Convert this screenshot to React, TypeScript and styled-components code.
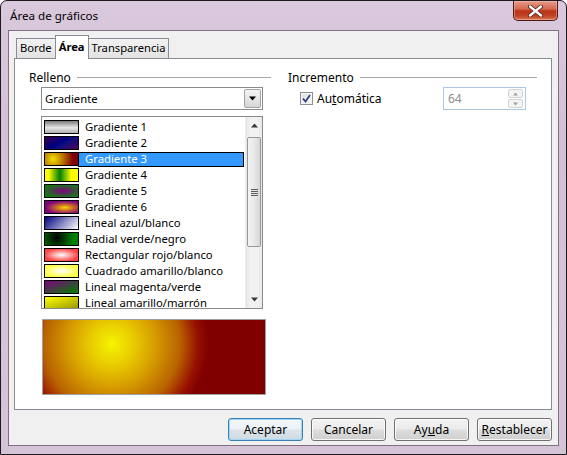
import styled, { createGlobalStyle } from "styled-components";

const GlobalStyle = createGlobalStyle`
  html, body {
    margin: 0;
    padding: 0;
    background: #ffffff;
  }
  body {
    font-family: "Noto Sans", "DejaVu Sans", sans-serif;
    font-size: 11.5px;
    color: #000000;
  }
  * {
    box-sizing: border-box;
  }
`;

// marco de la ventana (estilo Aero)
const Window = styled.div`
  width: 567px;
  height: 455px;
  border: 1px solid #1d191f;
  border-radius: 7px 7px 0 0;
  background: linear-gradient(to bottom, #dac8dc, #d3c0d5 30%, #d5c4d7);
  display: flex;
  flex-direction: column;
  overflow: hidden;
`;

const TitleBar = styled.div`
  height: 29px;
  flex: none;
  display: flex;
  align-items: flex-start;
  padding-left: 9px;
`;

const Title = styled.div`
  font-size: 11.6px;
  line-height: 29px;
  flex: 1;
`;

const CloseButton = styled.div`
  width: 45px;
  height: 20px;
  margin-right: 8px;
  border: 1px solid #4e1a12;
  border-top: none;
  border-radius: 0 0 5px 5px;
  background: linear-gradient(
    to bottom,
    #e59a8a 0%,
    #d46a52 42%,
    #bb3418 52%,
    #c04224 78%,
    #d87a5a 100%
  );
  box-shadow: inset 0 0 0 1px rgba(255, 210, 200, 0.4);
  display: flex;
  align-items: center;
  justify-content: center;
`;

const Client = styled.div`
  flex: 1;
  margin: 0 7px 8px 7px;
  border: 1px solid #7d7181;
  background: #f0f0f0;
  padding: 4px 6px 4px 5px;
  display: flex;
  flex-direction: column;
`;

const TabRow = styled.div`
  height: 23px;
  display: flex;
  align-items: flex-end;
  padding-left: 2px;
`;

const Tab = styled.div<{ $active?: boolean }>`
  position: relative;
  height: ${(p) => (p.$active ? "24px" : "20px")};
  margin-bottom: ${(p) => (p.$active ? "-1px" : "0")};
  padding: 0 3px;
  border: 1px solid #898c95;
  border-bottom: none;
  background: ${(p) =>
    p.$active ? "#ffffff" : "linear-gradient(to bottom, #f2f2f2, #e2e2e2)"};
  font-size: 11.2px;
  font-weight: ${(p) => (p.$active ? 700 : 400)};
  line-height: ${(p) => (p.$active ? "21px" : "18px")};
  z-index: ${(p) => (p.$active ? 1 : 0)};
  & + & {
    margin-left: -1px;
  }
`;

const Panel = styled.div`
  height: 352px;
  border: 1px solid #898c95;
  background: #ffffff;
  padding: 11px 14px 0 14px;
  display: grid;
  grid-template-columns: 242px 1fr;
  column-gap: 17px;
  align-items: start;
`;

const Column = styled.div`
  display: flex;
  flex-direction: column;
`;

const GroupHeader = styled.div`
  height: 15px;
  display: flex;
  align-items: center;
  font-size: 12px;
  &::after {
    content: "";
    flex: 1;
    margin-left: 6px;
    border-top: 1px solid #a9a9a9;
  }
`;

const Dropdown = styled.div`
  margin: 2px 0 0 12px;
  width: 222px;
  height: 23px;
  border: 1px solid #8a8a8a;
  background: #ffffff;
  display: flex;
  align-items: center;
  padding: 0 1px 0 3px;
  font-size: 11.3px;
`;

const DropdownText = styled.span`
  flex: 1;
`;

const DropButton = styled.div`
  width: 17px;
  height: 19px;
  border: 1px solid #a3a3a3;
  border-radius: 2px;
  background: linear-gradient(to bottom, #f4f4f4, #e6e6e6 50%, #d6d6d6);
  display: flex;
  align-items: center;
  justify-content: center;
`;

const ListBox = styled.div`
  margin: 6px 0 0 12px;
  width: 222px;
  height: 193px;
  border: 1px solid #8a8a8a;
  background: #ffffff;
  display: flex;
  overflow: hidden;
`;

const Items = styled.div`
  flex: 1;
  padding: 2px 1px 0 2px;
  overflow: hidden;
`;

const Row = styled.div`
  height: 16px;
  display: flex;
  align-items: center;
`;

const Swatch = styled.div<{ $bg: string }>`
  width: 35px;
  height: 14px;
  flex: none;
  border: 1px solid #000000;
  background: ${(p) => p.$bg};
`;

const ItemLabel = styled.div<{ $selected?: boolean }>`
  flex: 1;
  height: 15px;
  margin-left: -1px;
  padding-left: 6px;
  border: 1px solid ${(p) => (p.$selected ? "#000000" : "transparent")};
  background: ${(p) => (p.$selected ? "#3399ff" : "transparent")};
  color: ${(p) => (p.$selected ? "#ffffff" : "#000000")};
  font-size: 11.3px;
  line-height: 11px;
  white-space: nowrap;
`;

const ScrollBar = styled.div`
  width: 17px;
  flex: none;
  display: flex;
  flex-direction: column;
  background: linear-gradient(to right, #e6e6e6, #f2f2f2 30%, #f2f2f2 70%, #e8e8e8);
  border-left: 1px solid #ececec;
`;

const ScrollArrow = styled.div`
  height: 17px;
  flex: none;
  display: flex;
  align-items: center;
  justify-content: center;
`;

const ScrollTrack = styled.div`
  flex: 1;
  padding: 3px 1px 0 1px;
`;

const Thumb = styled.div`
  height: 110px;
  border: 1px solid #979797;
  border-radius: 2px;
  background: linear-gradient(to right, #f3f3f3, #e9e9e9 50%, #d6d6d6);
  display: flex;
  flex-direction: column;
  align-items: center;
  justify-content: center;
  gap: 1px;
`;

const GripLine = styled.div`
  width: 7px;
  height: 1px;
  background: #5a5a5a;
  box-shadow: 0 1px 0 #e8e8e8;
`;

const Preview = styled.div`
  margin: 10px 0 0 13px;
  width: 224px;
  height: 76px;
  border: 1px solid #a0a0a0;
  background: radial-gradient(
    circle at 69px 24px,
    #f4f400 0px,
    #ebd300 18px,
    #d9a400 40px,
    #b96200 68px,
    #960f00 86px,
    #800000 96px
  );
`;

const CheckRow = styled.div`
  margin-top: 2px;
  height: 23px;
  display: flex;
  align-items: center;
  font-size: 12px;
`;

const CheckBox = styled.div`
  width: 13px;
  height: 13px;
  margin-left: 12px;
  margin-right: 4px;
  border: 1px solid #8e8f8f;
  background: linear-gradient(135deg, #dedede, #fbfbfb);
  box-shadow: inset 0 0 0 1px #f4f4f4;
  display: flex;
  align-items: center;
  justify-content: center;
`;

const U = styled.span`
  text-decoration: underline;
`;

const SpinBox = styled.div`
  margin-left: auto;
  margin-right: 11px;
  width: 83px;
  height: 23px;
  border: 1px solid #aec6e4;
  background: #ffffff;
  display: flex;
  align-items: center;
  padding: 0 2px 0 4px;
  color: #8d8d8d;
`;

const SpinValue = styled.span`
  flex: 1;
`;

const SpinButtons = styled.div`
  width: 15px;
  height: 19px;
  display: flex;
  flex-direction: column;
  gap: 1px;
`;

const SpinButton = styled.div`
  flex: 1;
  border: 1px solid #d3d3d3;
  border-radius: 2px;
  background: #f4f4f4;
  display: flex;
  align-items: center;
  justify-content: center;
`;

const ButtonRow = styled.div`
  margin-top: 8px;
  display: flex;
  justify-content: flex-end;
  gap: 8px;
`;

const Button = styled.div<{ $default?: boolean }>`
  width: 75px;
  height: 23px;
  border: 1px solid ${(p) => (p.$default ? "#3c7fb1" : "#707070")};
  border-radius: 3px;
  background: ${(p) =>
    p.$default
      ? "linear-gradient(to bottom, #f4f8fb 0%, #ecf2f6 48%, #dbe4ea 52%, #cfd9e0 100%)"
      : "linear-gradient(to bottom, #f2f2f2 0%, #ebebeb 48%, #dddddd 52%, #cfcfcf 100%)"};
  box-shadow: inset 0 0 0 1px
    ${(p) => (p.$default ? "#9ed6f6" : "rgba(255, 255, 255, 0.8)")};
  font-size: 12px;
  display: flex;
  align-items: center;
  justify-content: center;
`;

const ArrowDown = ({ color = "#000", w = 7 }: { color?: string; w?: number }) => (
  <svg width={w} height={Math.ceil(w / 2) + 1} viewBox="0 0 7 4">
    <path d="M0 0 H7 L3.5 4 Z" fill={color} />
  </svg>
);

const ArrowUp = ({ color = "#000", w = 7 }: { color?: string; w?: number }) => (
  <svg width={w} height={Math.ceil(w / 2) + 1} viewBox="0 0 7 4">
    <path d="M0 4 H7 L3.5 0 Z" fill={color} />
  </svg>
);

const gradients = [
  { name: "Gradiente 1", bg: "linear-gradient(to bottom, #7a7a7a, #e6e6e6 55%, #b0b0b0)" },
  { name: "Gradiente 2", bg: "linear-gradient(150deg, #3a0050, #000080 45%, #10107a 60%, #500060)" },
  { name: "Gradiente 3", bg: "radial-gradient(circle at 8px 6px, #f0e000, #c08000 9px, #800000 20px)" },
  { name: "Gradiente 4", bg: "linear-gradient(to right, #ffff00 10%, #008000 45%, #ffff00 80%)" },
  { name: "Gradiente 5", bg: "radial-gradient(ellipse at 55% 50%, #800080, #207020 70%, #008000)" },
  { name: "Gradiente 6", bg: "radial-gradient(ellipse at 60% 55%, #ffd000, #c06030 35%, #800080 70%)" },
  { name: "Lineal azul/blanco", bg: "linear-gradient(135deg, #000080, #ffffff)" },
  { name: "Radial verde/negro", bg: "radial-gradient(circle at 35% 35%, #000000, #008000 75%)" },
  { name: "Rectangular rojo/blanco", bg: "radial-gradient(ellipse at 50% 50%, #ffffff, #ff4040 75%)" },
  { name: "Cuadrado amarillo/blanco", bg: "radial-gradient(ellipse at 50% 50%, #ffffff, #ffff40 75%)" },
  { name: "Lineal magenta/verde", bg: "linear-gradient(160deg, #800080, #008000)" },
  { name: "Lineal amarillo/marrón", bg: "linear-gradient(160deg, #ffff00, #808000 120%)" },
];

const App = () => (
  <>
    <GlobalStyle />
    <Window>
      <TitleBar>
        <Title>Área de gráficos</Title>
        <CloseButton>
          <svg width="15" height="12" viewBox="0 0 15 12">
            <path
              d="M2 1.5 L13 10.5 M13 1.5 L2 10.5"
              stroke="#4a2018"
              strokeWidth="4"
              strokeLinecap="round"
            />
            <path
              d="M2 1.5 L13 10.5 M13 1.5 L2 10.5"
              stroke="#ffffff"
              strokeWidth="2.4"
              strokeLinecap="round"
            />
          </svg>
        </CloseButton>
      </TitleBar>
      <Client>
        <TabRow>
          <Tab>Borde</Tab>
          <Tab $active>Área</Tab>
          <Tab>Transparencia</Tab>
        </TabRow>
        <Panel>
          <Column>
            <GroupHeader>Relleno</GroupHeader>
            <Dropdown>
              <DropdownText>Gradiente</DropdownText>
              <DropButton>
                <ArrowDown />
              </DropButton>
            </Dropdown>
            <ListBox>
              <Items>
                {gradients.map((g, i) => (
                  <Row key={g.name}>
                    <Swatch $bg={g.bg} />
                    <ItemLabel $selected={i === 2}>{g.name}</ItemLabel>
                  </Row>
                ))}
              </Items>
              <ScrollBar>
                <ScrollArrow>
                  <ArrowUp color="#3a3a3a" />
                </ScrollArrow>
                <ScrollTrack>
                  <Thumb>
                    <GripLine />
                    <GripLine />
                    <GripLine />
                    <GripLine />
                  </Thumb>
                </ScrollTrack>
                <ScrollArrow>
                  <ArrowDown color="#3a3a3a" />
                </ScrollArrow>
              </ScrollBar>
            </ListBox>
            <Preview />
          </Column>
          <Column>
            <GroupHeader>Incremento</GroupHeader>
            <CheckRow>
              <CheckBox>
                <svg width="9" height="9" viewBox="0 0 9 9">
                  <path
                    d="M1 4.5 L3.5 7.5 L8 1"
                    stroke="#31427c"
                    strokeWidth="1.8"
                    fill="none"
                  />
                </svg>
              </CheckBox>
              <span>
                Au<U>t</U>omática
              </span>
              <SpinBox>
                <SpinValue>64</SpinValue>
                <SpinButtons>
                  <SpinButton>
                    <ArrowUp color="#a0a0a0" w={5} />
                  </SpinButton>
                  <SpinButton>
                    <ArrowDown color="#a0a0a0" w={5} />
                  </SpinButton>
                </SpinButtons>
              </SpinBox>
            </CheckRow>
          </Column>
        </Panel>
        <ButtonRow>
          <Button $default>Aceptar</Button>
          <Button>Cancelar</Button>
          <Button>
            Ay<U>u</U>da
          </Button>
          <Button>
            <U>R</U>establecer
          </Button>
        </ButtonRow>
      </Client>
    </Window>
  </>
);

export default App;
